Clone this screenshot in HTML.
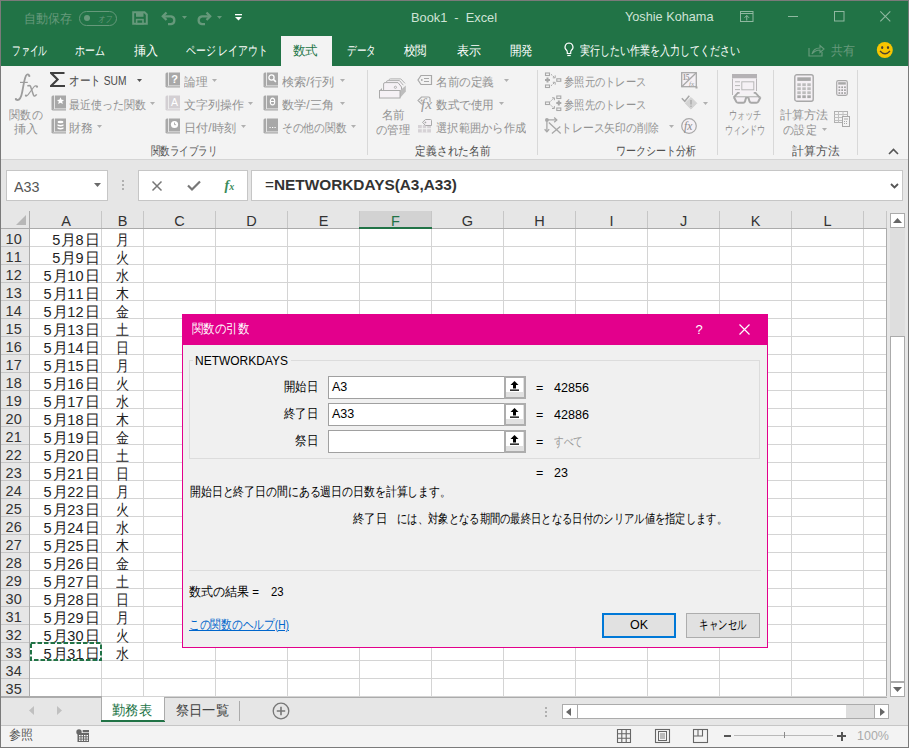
<!DOCTYPE html><html><head><meta charset="utf-8"><style>
html,body{margin:0;padding:0;width:909px;height:748px;overflow:hidden;background:#fff}
body{position:relative;font-family:"Liberation Sans",sans-serif;}
body div{position:absolute;box-sizing:border-box}
.t{white-space:nowrap}
svg{position:absolute;overflow:visible}
</style></head><body>
<div style="left:0px;top:0px;width:909px;height:748px;background:#7a7a7a"></div>
<div style="left:1px;top:1px;width:907px;height:65px;background:#217346"></div>
<div style="left:1px;top:66px;width:907px;height:93px;background:#f3f3f3"></div>
<div style="left:1px;top:159px;width:907px;height:1px;background:#d4d4d4"></div>
<div style="left:281px;top:36px;width:51px;height:30px;background:#f3f3f3"></div>
<div style="left:1px;top:160px;width:907px;height:51px;background:#e6e6e6"></div>
<div style="left:1px;top:211px;width:885px;height:18px;background:#e6e6e6"></div>
<div style="left:30px;top:229px;width:856px;height:468px;background:#fff"></div>
<div style="left:1px;top:229px;width:29px;height:468px;background:#e6e6e6"></div>
<div style="left:886px;top:211px;width:22px;height:486px;background:#e6e6e6"></div>
<div style="left:1px;top:697px;width:907px;height:28px;background:#e6e6e6"></div>
<div style="left:1px;top:725px;width:907px;height:22px;background:#f3f3f3"></div>
<div id="t1" class="t" style="left:23.8px;top:11.5px;font-size:12.5px;line-height:15.0px;color:#66997b;transform:scaleX(0.9231);transform-origin:left center;">自動保存</div>
<div style="left:79px;top:11px;width:38px;height:15px;border:1px solid #66997b;border-radius:8px"></div>
<div style="left:83.5px;top:14.5px;width:6.5px;height:6.5px;background:#66997b;border-radius:50%"></div>
<div id="t2" class="t" style="left:97.5px;top:13.6px;font-size:9px;line-height:10.8px;color:#66997b;transform:scaleX(0.7500);transform-origin:left center;font-style:italic">オフ</div>
<svg style="left:132px;top:11px;" width="16" height="14" viewBox="0 0 16 14"><path d="M1.2 1.2h11.3l2.3 2.3v9.3H1.2z" fill="none" stroke="#66997b" stroke-width="2"/><rect x="4" y="1" width="7.5" height="4.8" fill="#66997b"/><rect x="4.6" y="8.6" width="6.4" height="4.2" fill="none" stroke="#66997b" stroke-width="1.6"/></svg>
<svg style="left:161px;top:11px;" width="17" height="14" viewBox="0 0 17 14"><path d="M5.5 1.5L1.8 5.3L5.5 9" fill="none" stroke="#66997b" stroke-width="2.3"/><path d="M2.3 5.3H10A4 4 0 0 1 10 13.2H7" fill="none" stroke="#66997b" stroke-width="2.3"/></svg>
<svg style="left:182px;top:16px;" width="5" height="3" viewBox="0 0 5 3"><path d="M0 0h5l-2.5 3z" fill="#66997b"/></svg>
<svg style="left:195px;top:11px;" width="17" height="14" viewBox="0 0 17 14"><path d="M11.5 1.5L15.2 5.3L11.5 9" fill="none" stroke="#66997b" stroke-width="2.3"/><path d="M14.7 5.3H7A4 4 0 0 0 7 13.2H10" fill="none" stroke="#66997b" stroke-width="2.3"/></svg>
<svg style="left:217px;top:16px;" width="5" height="3" viewBox="0 0 5 3"><path d="M0 0h5l-2.5 3z" fill="#66997b"/></svg>
<svg style="left:235px;top:14px;" width="7" height="7" viewBox="0 0 7 7"><rect x="0" y="0" width="7" height="1.3" fill="#fff"/><path d="M0 3h7l-3.5 3.5z" fill="#fff"/></svg>
<div id="t3" class="t" style="left:153.5px;width:600px;text-align:center;top:10.4px;font-size:13.5px;line-height:16.2px;color:#cfe3d6;transform:scaleX(0.9472);transform-origin:center center;">Book1&nbsp; -&nbsp; Excel</div>
<div id="t4" class="t" style="left:625px;top:9.4px;font-size:13.5px;line-height:16.2px;color:#cfe3d6;transform:scaleX(0.9407);transform-origin:left center;">Yoshie Kohama</div>
<svg style="left:740px;top:11px;" width="13" height="10" viewBox="0 0 13 10"><rect x="0.5" y="0.5" width="12.5" height="10" fill="none" stroke="#8fb8a0"/><path d="M0.5 2.5h12.5" stroke="#8fb8a0"/><path d="M6.75 9.5V4.5M4.5 6.8L6.75 4.5 9 6.8" fill="none" stroke="#8fb8a0"/></svg>
<svg style="left:788px;top:16px;" width="10" height="1" viewBox="0 0 10 1"><rect width="10" height="1" fill="#8fb8a0"/></svg>
<svg style="left:834px;top:11px;" width="10" height="10" viewBox="0 0 10 10"><rect x="0.5" y="0.5" width="9.5" height="9.5" fill="none" stroke="#8fb8a0"/></svg>
<svg style="left:880px;top:11px;" width="10" height="10" viewBox="0 0 10 10"><path d="M0.3 0.3l10 10M10.3 0.3l-10 10" stroke="#8fb8a0" stroke-width="1.1"/></svg>
<div id="t5" class="t" style="left:12px;top:43.7px;font-size:12.5px;line-height:15.0px;color:#fff;transform:scaleX(0.6731);transform-origin:left center;">ファイル</div>
<div id="t6" class="t" style="left:75px;top:43.7px;font-size:12.5px;line-height:15.0px;color:#fff;transform:scaleX(0.7692);transform-origin:left center;">ホーム</div>
<div id="t7" class="t" style="left:134px;top:43.7px;font-size:12.5px;line-height:15.0px;color:#fff;transform:scaleX(0.9231);transform-origin:left center;">挿入</div>
<div id="t8" class="t" style="left:186px;top:43.7px;font-size:12.5px;line-height:15.0px;color:#fff;transform:scaleX(0.7629);transform-origin:left center;">ページ レイアウト</div>
<div id="t9" class="t" style="left:293px;top:43.7px;font-size:12.5px;line-height:15.0px;color:#217346;transform:scaleX(0.9615);transform-origin:left center;">数式</div>
<div id="t10" class="t" style="left:347px;top:43.7px;font-size:12.5px;line-height:15.0px;color:#fff;transform:scaleX(0.7436);transform-origin:left center;">データ</div>
<div id="t11" class="t" style="left:404px;top:43.7px;font-size:12.5px;line-height:15.0px;color:#fff;transform:scaleX(0.8846);transform-origin:left center;">校閲</div>
<div id="t12" class="t" style="left:457px;top:43.7px;font-size:12.5px;line-height:15.0px;color:#fff;transform:scaleX(0.9231);transform-origin:left center;">表示</div>
<div id="t13" class="t" style="left:510px;top:43.7px;font-size:12.5px;line-height:15.0px;color:#fff;transform:scaleX(0.8846);transform-origin:left center;">開発</div>
<svg style="left:564px;top:42px;" width="10" height="16" viewBox="0 0 10 16"><path d="M5 1a4 4 0 0 0-2.6 7c.6.6.9 1.3.9 2.2v1.3h3.4v-1.3c0-.9.3-1.6.9-2.2A4 4 0 0 0 5 1z" fill="none" stroke="#fff" stroke-width="1.2"/><path d="M3.3 13.5h3.4" stroke="#fff" stroke-width="1.2"/></svg>
<div id="t14" class="t" style="left:580px;top:43.7px;font-size:12.5px;line-height:15.0px;color:#fff;transform:scaleX(0.7692);transform-origin:left center;">実行したい作業を入力してください</div>
<svg style="left:808px;top:43px;" width="17" height="14" viewBox="0 0 17 14"><path d="M1 5v8h13v-4" fill="none" stroke="#66997b" stroke-width="1.2"/><path d="M4 11c1-4 4-6 8-6V2.5l4 3.5-4 3.5V7c-3 0-6 1.5-8 4z" fill="none" stroke="#66997b" stroke-width="1.1"/></svg>
<div id="t15" class="t" style="left:831px;top:43.7px;font-size:12.5px;line-height:15.0px;color:#66997b;transform:scaleX(0.9231);transform-origin:left center;">共有</div>
<svg style="left:876px;top:41px;" width="18" height="18" viewBox="0 0 18 18"><circle cx="8.8" cy="9" r="8" fill="#f6c500"/><ellipse cx="6.2" cy="6.6" rx="1.1" ry="1.5" fill="#4a4030"/><ellipse cx="12" cy="6.6" rx="1.1" ry="1.5" fill="#4a4030"/><path d="M4 10q5 5.5 10 0" fill="none" stroke="#4a4030" stroke-width="1.3"/></svg>
<svg style="left:10px;top:70px;" width="32" height="32" viewBox="0 0 32 32"><g fill="none" stroke="#9c9c9c"><path d="M19.2 5.8C18.8 4 17 3.9 16 5.6C15.2 7 14.6 9.5 14 12.4L12.2 22C11.3 26.8 10 30 7.5 30C6.5 30 5.9 29.5 5.8 29" stroke-width="1.8"/><path d="M10 12.4H17.8" stroke-width="1.2"/><path d="M17.4 16.2C18.6 15.3 19.8 15.2 20.6 16.5L23.5 25.2C24 26.3 25.3 26.3 26.7 24.4" stroke-width="1.5"/><path d="M27 16.6C26 15.3 24.8 15.8 23.8 17L18 24.8C17.3 25.8 16.4 26 15.8 25.6" stroke-width="1.1"/></g><g fill="#9c9c9c"><circle cx="19.3" cy="6" r="1.1"/><circle cx="27" cy="16.7" r="1.1"/><circle cx="15.9" cy="25.6" r="1.1"/><circle cx="5.9" cy="29.1" r="1.1"/></g></svg>
<div id="t16" class="t" style="left:-274px;width:600px;text-align:center;top:108.0px;font-size:12px;line-height:14.4px;color:#929292;transform:scaleX(0.9167);transform-origin:center center;">関数の</div>
<div id="t17" class="t" style="left:-274px;width:600px;text-align:center;top:121.8px;font-size:12px;line-height:14.4px;color:#929292;transform:scaleX(1.0000);transform-origin:center center;">挿入</div>
<svg style="left:49px;top:71px;" width="17" height="17" viewBox="0 0 17 17"><path d="M1 1H15.5V2.9H4.7L10.1 8.5L4.5 14.1H16V16H1V14.5L7.1 8.5L1 2.5Z" fill="#404040"/></svg>
<div id="t18" class="t" style="left:69px;top:74.0px;font-size:12.5px;line-height:15.0px;color:#4a4a4a;transform:scaleX(0.8185);transform-origin:left center;">オート SUM</div>
<svg style="left:137px;top:79px;" width="5" height="3" viewBox="0 0 5 3"><path d="M0 0h5l-2.5 3z" fill="#555"/></svg>
<svg style="left:51px;top:95px;" width="16" height="16" viewBox="0 0 16 16"><path d="M2 0.5h1.2v13.5H2A1.5 1.5 0 0 1 0.5 12.5V2A1.5 1.5 0 0 1 2 0.5z" fill="#a8a8a8"/><rect x="4" y="0.5" width="11" height="13" fill="#a8a8a8"/><path d="M0.5 13.2A1.6 1.6 0 0 0 2 15.5H15v-1.3H2.2" fill="#a8a8a8"/><path d="M9.5 2.3l1.1 2.4 2.5.2-1.9 1.7.6 2.5-2.3-1.3-2.3 1.3.6-2.5-1.9-1.7 2.5-.2z" fill="#fff"/></svg>
<div id="t19" class="t" style="left:69px;top:97.6px;font-size:12px;line-height:14.4px;color:#929292;transform:scaleX(0.9167);transform-origin:left center;">最近使った関数</div>
<svg style="left:150px;top:102px;" width="5" height="3" viewBox="0 0 5 3"><path d="M0 0h5l-2.5 3z" fill="#b0b0b0"/></svg>
<svg style="left:51px;top:118px;" width="16" height="16" viewBox="0 0 16 16"><path d="M2 0.5h1.2v13.5H2A1.5 1.5 0 0 1 0.5 12.5V2A1.5 1.5 0 0 1 2 0.5z" fill="#a8a8a8"/><rect x="4" y="0.5" width="11" height="13" fill="#a8a8a8"/><path d="M0.5 13.2A1.6 1.6 0 0 0 2 15.5H15v-1.3H2.2" fill="#a8a8a8"/><ellipse cx="9.5" cy="4" rx="3" ry="1.3" fill="#fff"/><path d="M6.5 6.2q3 1.6 6 0v1.5q-3 1.6-6 0zM6.5 9.2q3 1.6 6 0v1.5q-3 1.6-6 0z" fill="#fff"/></svg>
<div id="t20" class="t" style="left:69px;top:120.8px;font-size:12px;line-height:14.4px;color:#929292;transform:scaleX(0.9792);transform-origin:left center;">財務</div>
<svg style="left:97px;top:125px;" width="5" height="3" viewBox="0 0 5 3"><path d="M0 0h5l-2.5 3z" fill="#b0b0b0"/></svg>
<svg style="left:165px;top:72px;" width="16" height="16" viewBox="0 0 16 16"><path d="M2 0.5h1.2v13.5H2A1.5 1.5 0 0 1 0.5 12.5V2A1.5 1.5 0 0 1 2 0.5z" fill="#a8a8a8"/><rect x="4" y="0.5" width="11" height="13" fill="#a8a8a8"/><path d="M0.5 13.2A1.6 1.6 0 0 0 2 15.5H15v-1.3H2.2" fill="#a8a8a8"/><text x="9.5" y="11" font-size="11" font-family="Liberation Sans" font-weight="bold" text-anchor="middle" fill="#fff">?</text></svg>
<div id="t21" class="t" style="left:184px;top:74.7px;font-size:12px;line-height:14.4px;color:#929292;transform:scaleX(0.9792);transform-origin:left center;">論理</div>
<svg style="left:212px;top:79px;" width="5" height="3" viewBox="0 0 5 3"><path d="M0 0h5l-2.5 3z" fill="#b0b0b0"/></svg>
<svg style="left:165px;top:95px;" width="16" height="16" viewBox="0 0 16 16"><path d="M2 0.5h1.2v13.5H2A1.5 1.5 0 0 1 0.5 12.5V2A1.5 1.5 0 0 1 2 0.5z" fill="#d3cfd3"/><rect x="4" y="0.5" width="11" height="13" fill="#d3cfd3"/><path d="M0.5 13.2A1.6 1.6 0 0 0 2 15.5H15v-1.3H2.2" fill="#d3cfd3"/><text x="9.5" y="11" font-size="10.5" font-family="Liberation Sans" text-anchor="middle" fill="#fff">A</text></svg>
<div id="t22" class="t" style="left:184px;top:97.6px;font-size:12px;line-height:14.4px;color:#929292;transform:scaleX(1.0000);transform-origin:left center;">文字列操作</div>
<svg style="left:248px;top:102px;" width="5" height="3" viewBox="0 0 5 3"><path d="M0 0h5l-2.5 3z" fill="#b0b0b0"/></svg>
<svg style="left:165px;top:118px;" width="16" height="16" viewBox="0 0 16 16"><path d="M2 0.5h1.2v13.5H2A1.5 1.5 0 0 1 0.5 12.5V2A1.5 1.5 0 0 1 2 0.5z" fill="#a8a8a8"/><rect x="4" y="0.5" width="11" height="13" fill="#a8a8a8"/><path d="M0.5 13.2A1.6 1.6 0 0 0 2 15.5H15v-1.3H2.2" fill="#a8a8a8"/><circle cx="9.5" cy="6.5" r="3.6" fill="#fff"/><path d="M9.5 4.5v2.2h1.6" stroke="#a8a8a8" stroke-width="0.9" fill="none"/></svg>
<div id="t23" class="t" style="left:184px;top:120.8px;font-size:12px;line-height:14.4px;color:#929292;transform:scaleX(1.0128);transform-origin:left center;">日付/時刻</div>
<svg style="left:241px;top:125px;" width="5" height="3" viewBox="0 0 5 3"><path d="M0 0h5l-2.5 3z" fill="#b0b0b0"/></svg>
<svg style="left:263px;top:72px;" width="16" height="16" viewBox="0 0 16 16"><path d="M2 0.5h1.2v13.5H2A1.5 1.5 0 0 1 0.5 12.5V2A1.5 1.5 0 0 1 2 0.5z" fill="#a8a8a8"/><rect x="4" y="0.5" width="11" height="13" fill="#a8a8a8"/><path d="M0.5 13.2A1.6 1.6 0 0 0 2 15.5H15v-1.3H2.2" fill="#a8a8a8"/><circle cx="8.5" cy="5.5" r="2.6" fill="none" stroke="#fff" stroke-width="1.3"/><path d="M10.3 7.3l2.6 2.6" stroke="#fff" stroke-width="1.6"/></svg>
<div id="t24" class="t" style="left:282px;top:74.7px;font-size:12px;line-height:14.4px;color:#929292;transform:scaleX(1.0128);transform-origin:left center;">検索/行列</div>
<svg style="left:340px;top:79px;" width="5" height="3" viewBox="0 0 5 3"><path d="M0 0h5l-2.5 3z" fill="#b0b0b0"/></svg>
<svg style="left:263px;top:95px;" width="16" height="16" viewBox="0 0 16 16"><path d="M2 0.5h1.2v13.5H2A1.5 1.5 0 0 1 0.5 12.5V2A1.5 1.5 0 0 1 2 0.5z" fill="#a8a8a8"/><rect x="4" y="0.5" width="11" height="13" fill="#a8a8a8"/><path d="M0.5 13.2A1.6 1.6 0 0 0 2 15.5H15v-1.3H2.2" fill="#a8a8a8"/><ellipse cx="9.5" cy="6.5" rx="2.2" ry="3.4" fill="none" stroke="#fff" stroke-width="1.1"/><path d="M7.5 6.5h4" stroke="#fff" stroke-width="1"/></svg>
<div id="t25" class="t" style="left:282px;top:97.6px;font-size:12px;line-height:14.4px;color:#929292;transform:scaleX(1.0128);transform-origin:left center;">数学/三角</div>
<svg style="left:340px;top:102px;" width="5" height="3" viewBox="0 0 5 3"><path d="M0 0h5l-2.5 3z" fill="#b0b0b0"/></svg>
<svg style="left:263px;top:118px;" width="16" height="16" viewBox="0 0 16 16"><path d="M2 0.5h1.2v13.5H2A1.5 1.5 0 0 1 0.5 12.5V2A1.5 1.5 0 0 1 2 0.5z" fill="#a8a8a8"/><rect x="4" y="0.5" width="11" height="13" fill="#a8a8a8"/><path d="M0.5 13.2A1.6 1.6 0 0 0 2 15.5H15v-1.3H2.2" fill="#a8a8a8"/><path d="M6.5 9.5h1.2M9 9.5h1.2M11.5 9.5h1.2" stroke="#fff" stroke-width="1.2"/></svg>
<div id="t26" class="t" style="left:282px;top:120.8px;font-size:12px;line-height:14.4px;color:#929292;transform:scaleX(0.8958);transform-origin:left center;">その他の関数</div>
<svg style="left:351px;top:125px;" width="5" height="3" viewBox="0 0 5 3"><path d="M0 0h5l-2.5 3z" fill="#b0b0b0"/></svg>
<div id="t27" class="t" style="left:-116.0px;width:600px;text-align:center;top:144.1px;font-size:12px;line-height:14.4px;color:#505050;transform:scaleX(0.7976);transform-origin:center center;">関数ライブラリ</div>
<div style="left:367px;top:70px;width:1px;height:85px;background:#d8d8d8"></div>
<svg style="left:379px;top:77px;" width="28" height="22" viewBox="0 0 28 22"><path d="M10 3.2Q10 1.9 11.4 1.9H21.8L26 6.4" fill="none" stroke="#b0b0b0" stroke-width="1"/><path d="M7.5 5Q7.5 3.6 8.9 3.6H20.5L24.3 8.2" fill="#f5f1f5" stroke="#b0b0b0" stroke-width="1"/><path d="M4.6 13V7Q4.6 5.6 6 5.6H19L22.5 10V13" fill="#f5f1f5" stroke="#aaa" stroke-width="1"/><circle cx="16.4" cy="10.3" r="1.1" fill="none" stroke="#aaa" stroke-width="0.9"/><path d="M21 13.5L26.8 8.4V14.5L21 21z" fill="#bdbdbd"/><rect x="0.5" y="13.5" width="20.5" height="7.5" fill="#f5f1f5" stroke="#aaa" stroke-width="1"/><path d="M0.5 13.5L3 11V13.5z" fill="#aaa"/></svg>
<div id="t28" class="t" style="left:93px;width:600px;text-align:center;top:108.2px;font-size:12px;line-height:14.4px;color:#929292;transform:scaleX(0.9583);transform-origin:center center;">名前</div>
<div id="t29" class="t" style="left:93px;width:600px;text-align:center;top:122.8px;font-size:12px;line-height:14.4px;color:#929292;transform:scaleX(0.9444);transform-origin:center center;">の管理</div>
<svg style="left:417px;top:74px;" width="16" height="12" viewBox="0 0 16 12"><path d="M4 1.5h10.5v9H4L1 6z" fill="none" stroke="#a8a8a8" stroke-width="1.2"/><circle cx="4.8" cy="6" r="0.9" fill="#a8a8a8"/><path d="M7 4.5h5M7 7.5h5" stroke="#a8a8a8" stroke-width="1.1"/></svg>
<div id="t30" class="t" style="left:436px;top:75.1px;font-size:12px;line-height:14.4px;color:#929292;transform:scaleX(0.9667);transform-origin:left center;">名前の定義</div>
<svg style="left:504px;top:79px;" width="5" height="3" viewBox="0 0 5 3"><path d="M0 0h5l-2.5 3z" fill="#b0b0b0"/></svg>
<svg style="left:417px;top:96px;" width="16" height="16" viewBox="0 0 16 16"><path d="M13 6V2.5Q13 1 11.5 1H4.5L1 4.5L4.5 8H6" fill="none" stroke="#aaa" stroke-width="1.1"/><circle cx="4.6" cy="4.5" r="1" fill="#aaa"/></svg>
<div id="t31" class="t" style="left:421px;top:97.1px;font-size:14px;line-height:16.8px;color:#9a9a9a;font-family:'Liberation Serif',serif;transform:scaleX(1.1);transform-origin:left center"><i>fx</i></div>
<div id="t32" class="t" style="left:436px;top:97.5px;font-size:12px;line-height:14.4px;color:#929292;transform:scaleX(0.9667);transform-origin:left center;">数式で使用</div>
<svg style="left:499px;top:102px;" width="5" height="3" viewBox="0 0 5 3"><path d="M0 0h5l-2.5 3z" fill="#b0b0b0"/></svg>
<svg style="left:418px;top:119px;" width="15" height="15" viewBox="0 0 15 15"><rect x="0" y="6" width="13" height="7.5" fill="#d6d2d6"/><path d="M0 9.7h13M4.3 6v7.5M8.7 6v7.5" stroke="#f3f3f3" stroke-width="1"/><path d="M13.5 6.5V1.5Q13.5 0.5 12.5 0.5H7.5L4.5 3.3L7.5 6.5z" fill="#f5f1f5" stroke="#aaa" stroke-width="1"/><circle cx="7.4" cy="3.4" r="0.9" fill="#aaa"/></svg>
<div id="t33" class="t" style="left:436px;top:120.9px;font-size:12px;line-height:14.4px;color:#929292;transform:scaleX(0.9375);transform-origin:left center;">選択範囲から作成</div>
<div id="t34" class="t" style="left:153.0px;width:600px;text-align:center;top:143.6px;font-size:12px;line-height:14.4px;color:#505050;transform:scaleX(0.8929);transform-origin:center center;">定義された名前</div>
<div style="left:537px;top:70px;width:1px;height:85px;background:#d8d8d8"></div>
<svg style="left:544px;top:72px;" width="18" height="16" viewBox="0 0 18 16"><rect x="1.5" y="1" width="4" height="2.5" fill="none" stroke="#a8a8a8" stroke-width="1.1"/><rect x="1.5" y="13" width="4" height="2.5" fill="none" stroke="#a8a8a8" stroke-width="1.1"/><rect x="12.8" y="6.8" width="4" height="2.5" fill="none" stroke="#a8a8a8" stroke-width="1.1"/><path d="M3.5 5.6v5M1 8.1h5" stroke="#a8a8a8" stroke-width="2"/><path d="M7 2.3l3.5 3.2M7 13.8l3.5-3.2" stroke="#a8a8a8" stroke-width="1" stroke-dasharray="1.6 0.9"/><path d="M8.8 5.8h2.4V3.4M8.8 10.3h2.4v2.4" fill="none" stroke="#a8a8a8" stroke-width="1"/></svg>
<div id="t35" class="t" style="left:564px;top:74.9px;font-size:12px;line-height:14.4px;color:#929292;transform:scaleX(0.8542);transform-origin:left center;">参照元のトレース</div>
<svg style="left:544px;top:95px;" width="18" height="16" viewBox="0 0 18 16"><rect x="1.5" y="7" width="4" height="2.5" fill="none" stroke="#a8a8a8" stroke-width="1.1"/><rect x="12.8" y="1" width="4" height="2.5" fill="none" stroke="#a8a8a8" stroke-width="1.1"/><rect x="12.8" y="13" width="4" height="2.5" fill="none" stroke="#a8a8a8" stroke-width="1.1"/><path d="M14.8 5.6v5M12.3 8.1h5" stroke="#a8a8a8" stroke-width="2"/><path d="M6.5 6.3l3.5-3.2M6.5 10l3.5 3.2" stroke="#a8a8a8" stroke-width="1" stroke-dasharray="1.6 0.9"/><path d="M8 2.8h2.4v2.4M8 13.5h2.4v-2.4" fill="none" stroke="#a8a8a8" stroke-width="1"/></svg>
<div id="t36" class="t" style="left:564px;top:97.9px;font-size:12px;line-height:14.4px;color:#929292;transform:scaleX(0.8542);transform-origin:left center;">参照先のトレース</div>
<svg style="left:544px;top:118px;" width="18" height="17" viewBox="0 0 18 17"><circle cx="2.9" cy="1.9" r="1.9" fill="#a8a8a8"/><path d="M2.9 2v11.5M2.9 1.9h9.6" stroke="#a8a8a8" stroke-width="1.3"/><path d="M0.6 11.2l2.3 2.6 2.3-2.6M10.2-0.4l2.6 2.3-2.6 2.3" fill="none" stroke="#a8a8a8" stroke-width="1.3"/><path d="M4.8 4.5L16.7 15.5M7.9 15.5L16.3 8.5" stroke="#a8a8a8" stroke-width="1.3"/></svg>
<div id="t37" class="t" style="left:560.5px;top:120.9px;font-size:12px;line-height:14.4px;color:#929292;transform:scaleX(0.9028);transform-origin:left center;">トレース矢印の削除</div>
<svg style="left:669px;top:125px;" width="5" height="3" viewBox="0 0 5 3"><path d="M0 0h5l-2.5 3z" fill="#b0b0b0"/></svg>
<svg style="left:681px;top:72px;" width="17" height="17" viewBox="0 0 17 17"><rect x="0.7" y="0.7" width="14.6" height="14" fill="#f5f1f5" stroke="#a8a8a8" stroke-width="1.3"/><path d="M0.7 14.7L15.3 0.7" stroke="#a8a8a8" stroke-width="1.3"/><text x="1.6" y="7.6" font-size="7.5" font-family="Liberation Serif" font-weight="bold" fill="#9a9a9a" letter-spacing="-0.6">15</text><text x="8" y="13.8" font-size="7" font-family="Liberation Serif" font-style="italic" fill="#9a9a9a">fx</text><rect x="14.5" y="14.5" width="2" height="2" fill="#a8a8a8"/></svg>
<svg style="left:681px;top:95px;" width="17" height="16" viewBox="0 0 17 16"><path d="M0.8 3.3l3 3 4.5-5.5" fill="none" stroke="#a8a8a8" stroke-width="1.5"/><path d="M10 2.5l5.8 5.8-5.8 5.8-5.8-5.8z" fill="#d3d3d3" stroke="#d3d3d3" stroke-width="1" stroke-linejoin="round"/><path d="M10 5v4.5" stroke="#aaa" stroke-width="1.4"/><circle cx="10" cy="11.3" r="0.8" fill="#aaa"/></svg>
<svg style="left:703px;top:102px;" width="5" height="3" viewBox="0 0 5 3"><path d="M0 0h5l-2.5 3z" fill="#b0b0b0"/></svg>
<svg style="left:681px;top:118px;" width="17" height="17" viewBox="0 0 17 17"><circle cx="8" cy="8" r="7.3" fill="#f5f1f5" stroke="#a8a8a8" stroke-width="1.2"/></svg>
<div id="t38" class="t" style="left:684px;top:119.6px;font-size:11.5px;line-height:13.8px;color:#8a8a8a;font-family:'Liberation Serif',serif"><i>fx</i></div>
<div id="t39" class="t" style="left:356.0px;width:600px;text-align:center;top:144.1px;font-size:12px;line-height:14.4px;color:#505050;transform:scaleX(0.8333);transform-origin:center center;">ワークシート分析</div>
<div style="left:717px;top:70px;width:1px;height:85px;background:#d8d8d8"></div>
<svg style="left:732px;top:74px;" width="30" height="30" viewBox="0 0 30 30"><rect x="0" y="0" width="25" height="4.5" fill="#b5b2b5"/><rect x="0.5" y="4.5" width="24" height="16" fill="#f5f1f5"/><path d="M0.5 4.5V21M24.5 4.5V17" stroke="#b8b5b8" stroke-width="1"/><path d="M3 7.8h5M3 11.6h5M3 15.6h5" stroke="#b8b8b8" stroke-width="1"/><rect x="9.8" y="7.8" width="12" height="8" fill="none" stroke="#b8b8b8" stroke-width="1"/><path d="M1.5 23.3h27" stroke="#a8a8a8" stroke-width="2"/><path d="M2 23.3l2.3 4.4q.6 1 1.8 1h5.2q1.2 0 1.6-1l1.3-4.4" fill="#f5f1f5" stroke="#a8a8a8" stroke-width="2"/><path d="M16.3 23.3l1.3 4.4q.4 1 1.6 1h5.2q1.2 0 1.8-1l2.3-4.4" fill="#f5f1f5" stroke="#a8a8a8" stroke-width="2"/><path d="M1.8 23.3l4-4.5h1.8M27.5 23.3l-4-4.5h-1.8" stroke="#a8a8a8" stroke-width="1.8" fill="none"/></svg>
<div id="t40" class="t" style="left:445px;width:600px;text-align:center;top:108.2px;font-size:12px;line-height:14.4px;color:#929292;transform:scaleX(0.6875);transform-origin:center center;">ウォッチ</div>
<div id="t41" class="t" style="left:445px;width:600px;text-align:center;top:122.8px;font-size:12px;line-height:14.4px;color:#929292;transform:scaleX(0.6833);transform-origin:center center;">ウィンドウ</div>
<div style="left:773px;top:70px;width:1px;height:85px;background:#d8d8d8"></div>
<svg style="left:794px;top:74px;" width="20" height="28" viewBox="0 0 20 28"><rect x="0.8" y="0.8" width="18.4" height="26.4" rx="2" fill="#f5f1f5" stroke="#a8a8a8" stroke-width="1.4"/><rect x="3.3" y="3.3" width="13.5" height="3.6" fill="#a8a8a8"/><rect x="3.3" y="9.3" width="3.5" height="2.8" fill="#bcbcbc"/><rect x="8.3" y="9.3" width="3.5" height="2.8" fill="#bcbcbc"/><rect x="13.3" y="9.3" width="3.5" height="2.8" fill="#bcbcbc"/><rect x="3.3" y="13.3" width="3.5" height="2.8" fill="#bcbcbc"/><rect x="8.3" y="13.3" width="3.5" height="2.8" fill="#bcbcbc"/><rect x="13.3" y="13.3" width="3.5" height="2.8" fill="#bcbcbc"/><rect x="3.3" y="17.3" width="3.5" height="2.8" fill="#bcbcbc"/><rect x="8.3" y="17.3" width="3.5" height="2.8" fill="#bcbcbc"/><rect x="13.3" y="17.3" width="3.5" height="2.8" fill="#bcbcbc"/><rect x="3.3" y="21.3" width="3.5" height="2.8" fill="#a8a8a8"/><rect x="8.3" y="21.3" width="3.5" height="2.8" fill="#a8a8a8"/><rect x="13.3" y="21.3" width="3.5" height="2.8" fill="#a8a8a8"/></svg>
<div id="t42" class="t" style="left:504px;width:600px;text-align:center;top:108.2px;font-size:12px;line-height:14.4px;color:#929292;transform:scaleX(1.0000);transform-origin:center center;">計算方法</div>
<div id="t43" class="t" style="left:500px;width:600px;text-align:center;top:122.8px;font-size:12px;line-height:14.4px;color:#929292;transform:scaleX(0.9167);transform-origin:center center;">の設定</div>
<svg style="left:822px;top:128px;" width="5" height="3" viewBox="0 0 5 3"><path d="M0 0h5l-2.5 3z" fill="#b0b0b0"/></svg>
<svg style="left:836px;top:80px;" width="12" height="16" viewBox="0 0 12 16"><rect x="0.7" y="0.7" width="10.6" height="14.6" rx="1.5" fill="#f5f1f5" stroke="#a8a8a8" stroke-width="1.2"/><rect x="2.2" y="2.2" width="7.6" height="2.4" fill="#a8a8a8"/><rect x="2.5" y="6.4" width="1.7" height="1.7" fill="#a0a0a0"/><rect x="5.3" y="6.4" width="1.7" height="1.7" fill="#a0a0a0"/><rect x="8.1" y="6.4" width="1.7" height="1.7" fill="#a0a0a0"/><rect x="2.5" y="9.3" width="1.7" height="1.7" fill="#a0a0a0"/><rect x="5.3" y="9.3" width="1.7" height="1.7" fill="#a0a0a0"/><rect x="8.1" y="9.3" width="1.7" height="1.7" fill="#a0a0a0"/><rect x="2.5" y="12.2" width="1.7" height="1.7" fill="#a0a0a0"/><rect x="5.3" y="12.2" width="1.7" height="1.7" fill="#a0a0a0"/><rect x="8.1" y="12.2" width="1.7" height="1.7" fill="#a0a0a0"/></svg>
<svg style="left:834px;top:111px;" width="16" height="16" viewBox="0 0 16 16"><rect x="0.5" y="0.5" width="13" height="11" fill="#f3f3f3" stroke="#b0b0b0"/><path d="M0.5 3.5h13M0.5 6.5h13M0.5 9.5h13M4.5 0.5v11M9 0.5v11" stroke="#c0c0c0"/><rect x="8.5" y="5.5" width="7" height="10" fill="#f3f3f3" stroke="#a8a8a8"/><path d="M10 8h4M10 10.5h1M12 10.5h1M10 12.5h1M12 12.5h1" stroke="#a8a8a8"/></svg>
<div id="t44" class="t" style="left:516.0px;width:600px;text-align:center;top:144.3px;font-size:12px;line-height:14.4px;color:#505050;transform:scaleX(0.9792);transform-origin:center center;">計算方法</div>
<div style="left:857px;top:70px;width:1px;height:85px;background:#d8d8d8"></div>
<svg style="left:888px;top:148px;" width="11" height="7" viewBox="0 0 11 7"><path d="M1 6l4.5-4.5L10 6" fill="none" stroke="#555" stroke-width="1.6"/></svg>
<div style="left:6px;top:170px;width:102px;height:31px;background:#fff;border:1px solid #c6c6c6"></div>
<div id="t45" class="t" style="left:14px;top:178.0px;font-size:15px;line-height:18.0px;color:#555;transform:scaleX(0.9549);transform-origin:left center;">A33</div>
<svg style="left:94px;top:183px;" width="7" height="4" viewBox="0 0 7 4"><path d="M0 0h7l-3.5 4z" fill="#6a6a6a"/></svg>
<div style="left:122px;top:180px;width:2px;height:2px;background:#b0b0b0"></div>
<div style="left:122px;top:184px;width:2px;height:2px;background:#b0b0b0"></div>
<div style="left:122px;top:188px;width:2px;height:2px;background:#b0b0b0"></div>
<div style="left:138px;top:170px;width:110px;height:31px;background:#fff;border:1px solid #c6c6c6"></div>
<svg style="left:152px;top:181px;" width="10" height="10" viewBox="0 0 10 10"><path d="M0.5 0.5l9 9M9.5 0.5l-9 9" stroke="#777" stroke-width="1.5"/></svg>
<svg style="left:187px;top:180px;" width="14" height="11" viewBox="0 0 14 11"><path d="M1 5.5l4 4L13 1.5" fill="none" stroke="#777" stroke-width="2.2"/></svg>
<div id="t46" class="t" style="left:224.5px;top:178.1px;font-size:14px;line-height:16.8px;color:#3b8a5a;font-family:'Liberation Serif',serif"><i><b>f</b></i><i style="font-size:10px"><b>x</b></i></div>
<div style="left:251px;top:170px;width:652px;height:31px;background:#fff;border:1px solid #c6c6c6"></div>
<div id="t47" class="t" style="left:265px;top:175.7px;font-size:15.5px;line-height:18.6px;color:#333;transform:scaleX(0.9914);transform-origin:left center;font-weight:bold"><span style="font-weight:normal">=</span>NETWORKDAYS(A3,A33)</div>
<svg style="left:890px;top:183px;" width="9" height="6" viewBox="0 0 9 6"><path d="M1 1l3.5 3.5L8 1" fill="none" stroke="#555" stroke-width="1.8"/></svg>
<div style="left:360px;top:211px;width:71px;height:18px;background:#d2d2d2"></div>
<div style="left:101px;top:211px;width:1px;height:17px;background:#c6c6c6"></div>
<div style="left:143px;top:211px;width:1px;height:17px;background:#c6c6c6"></div>
<div style="left:215px;top:211px;width:1px;height:17px;background:#c6c6c6"></div>
<div style="left:287px;top:211px;width:1px;height:17px;background:#c6c6c6"></div>
<div style="left:359px;top:211px;width:1px;height:17px;background:#c6c6c6"></div>
<div style="left:431px;top:211px;width:1px;height:17px;background:#c6c6c6"></div>
<div style="left:503px;top:211px;width:1px;height:17px;background:#c6c6c6"></div>
<div style="left:575px;top:211px;width:1px;height:17px;background:#c6c6c6"></div>
<div style="left:647px;top:211px;width:1px;height:17px;background:#c6c6c6"></div>
<div style="left:719px;top:211px;width:1px;height:17px;background:#c6c6c6"></div>
<div style="left:791px;top:211px;width:1px;height:17px;background:#c6c6c6"></div>
<div style="left:863px;top:211px;width:1px;height:17px;background:#c6c6c6"></div>
<div style="left:886px;top:211px;width:1px;height:17px;background:#c6c6c6"></div>
<div style="left:29px;top:211px;width:1px;height:486px;background:#ababab"></div>
<div style="left:1px;top:228px;width:885px;height:1px;background:#ababab"></div>
<div style="left:359px;top:227px;width:73px;height:2px;background:#217346"></div>
<svg style="left:16px;top:215px;" width="10" height="10" viewBox="0 0 10 10"><path d="M10 0v10H0z" fill="#b7b7b7"/></svg>
<div id="t48" class="t" style="left:-234.0px;width:600px;text-align:center;top:213.3px;font-size:14.5px;line-height:17.4px;color:#333;">A</div>
<div id="t49" class="t" style="left:-177.5px;width:600px;text-align:center;top:213.3px;font-size:14.5px;line-height:17.4px;color:#333;">B</div>
<div id="t50" class="t" style="left:-120.5px;width:600px;text-align:center;top:213.3px;font-size:14.5px;line-height:17.4px;color:#333;">C</div>
<div id="t51" class="t" style="left:-48.5px;width:600px;text-align:center;top:213.3px;font-size:14.5px;line-height:17.4px;color:#333;">D</div>
<div id="t52" class="t" style="left:23.5px;width:600px;text-align:center;top:213.3px;font-size:14.5px;line-height:17.4px;color:#333;">E</div>
<div id="t53" class="t" style="left:95.5px;width:600px;text-align:center;top:213.3px;font-size:14.5px;line-height:17.4px;color:#217346;">F</div>
<div id="t54" class="t" style="left:167.5px;width:600px;text-align:center;top:213.3px;font-size:14.5px;line-height:17.4px;color:#333;">G</div>
<div id="t55" class="t" style="left:239.5px;width:600px;text-align:center;top:213.3px;font-size:14.5px;line-height:17.4px;color:#333;">H</div>
<div id="t56" class="t" style="left:311.5px;width:600px;text-align:center;top:213.3px;font-size:14.5px;line-height:17.4px;color:#333;">I</div>
<div id="t57" class="t" style="left:383.5px;width:600px;text-align:center;top:213.3px;font-size:14.5px;line-height:17.4px;color:#333;">J</div>
<div id="t58" class="t" style="left:455.5px;width:600px;text-align:center;top:213.3px;font-size:14.5px;line-height:17.4px;color:#333;">K</div>
<div id="t59" class="t" style="left:527.5px;width:600px;text-align:center;top:213.3px;font-size:14.5px;line-height:17.4px;color:#333;">L</div>
<div style="left:101px;top:229px;width:1px;height:468px;background:#d4d4d4"></div>
<div style="left:143px;top:229px;width:1px;height:468px;background:#d4d4d4"></div>
<div style="left:215px;top:229px;width:1px;height:468px;background:#d4d4d4"></div>
<div style="left:287px;top:229px;width:1px;height:468px;background:#d4d4d4"></div>
<div style="left:359px;top:229px;width:1px;height:468px;background:#d4d4d4"></div>
<div style="left:431px;top:229px;width:1px;height:468px;background:#d4d4d4"></div>
<div style="left:503px;top:229px;width:1px;height:468px;background:#d4d4d4"></div>
<div style="left:575px;top:229px;width:1px;height:468px;background:#d4d4d4"></div>
<div style="left:647px;top:229px;width:1px;height:468px;background:#d4d4d4"></div>
<div style="left:719px;top:229px;width:1px;height:468px;background:#d4d4d4"></div>
<div style="left:791px;top:229px;width:1px;height:468px;background:#d4d4d4"></div>
<div style="left:863px;top:229px;width:1px;height:468px;background:#d4d4d4"></div>
<div style="left:30px;top:246px;width:856px;height:1px;background:#d4d4d4"></div>
<div style="left:1px;top:246px;width:28px;height:1px;background:#c6c6c6"></div>
<div id="t60" class="t" style="left:5.5px;top:230.8px;font-size:14.5px;line-height:17.4px;color:#333;">1</div>
<div id="t61" class="t" style="left:13.7px;top:230.8px;font-size:14.5px;line-height:17.4px;color:#333;">0</div>
<div style="left:30px;top:264px;width:856px;height:1px;background:#d4d4d4"></div>
<div style="left:1px;top:264px;width:28px;height:1px;background:#c6c6c6"></div>
<div id="t62" class="t" style="left:5.5px;top:248.8px;font-size:14.5px;line-height:17.4px;color:#333;">1</div>
<div id="t63" class="t" style="left:13.7px;top:248.8px;font-size:14.5px;line-height:17.4px;color:#333;">1</div>
<div style="left:30px;top:282px;width:856px;height:1px;background:#d4d4d4"></div>
<div style="left:1px;top:282px;width:28px;height:1px;background:#c6c6c6"></div>
<div id="t64" class="t" style="left:5.5px;top:266.8px;font-size:14.5px;line-height:17.4px;color:#333;">1</div>
<div id="t65" class="t" style="left:13.7px;top:266.8px;font-size:14.5px;line-height:17.4px;color:#333;">2</div>
<div style="left:30px;top:300px;width:856px;height:1px;background:#d4d4d4"></div>
<div style="left:1px;top:300px;width:28px;height:1px;background:#c6c6c6"></div>
<div id="t66" class="t" style="left:5.5px;top:284.8px;font-size:14.5px;line-height:17.4px;color:#333;">1</div>
<div id="t67" class="t" style="left:13.7px;top:284.8px;font-size:14.5px;line-height:17.4px;color:#333;">3</div>
<div style="left:30px;top:318px;width:856px;height:1px;background:#d4d4d4"></div>
<div style="left:1px;top:318px;width:28px;height:1px;background:#c6c6c6"></div>
<div id="t68" class="t" style="left:5.5px;top:302.8px;font-size:14.5px;line-height:17.4px;color:#333;">1</div>
<div id="t69" class="t" style="left:13.7px;top:302.8px;font-size:14.5px;line-height:17.4px;color:#333;">4</div>
<div style="left:30px;top:336px;width:856px;height:1px;background:#d4d4d4"></div>
<div style="left:1px;top:336px;width:28px;height:1px;background:#c6c6c6"></div>
<div id="t70" class="t" style="left:5.5px;top:320.8px;font-size:14.5px;line-height:17.4px;color:#333;">1</div>
<div id="t71" class="t" style="left:13.7px;top:320.8px;font-size:14.5px;line-height:17.4px;color:#333;">5</div>
<div style="left:30px;top:354px;width:856px;height:1px;background:#d4d4d4"></div>
<div style="left:1px;top:354px;width:28px;height:1px;background:#c6c6c6"></div>
<div id="t72" class="t" style="left:5.5px;top:338.8px;font-size:14.5px;line-height:17.4px;color:#333;">1</div>
<div id="t73" class="t" style="left:13.7px;top:338.8px;font-size:14.5px;line-height:17.4px;color:#333;">6</div>
<div style="left:30px;top:372px;width:856px;height:1px;background:#d4d4d4"></div>
<div style="left:1px;top:372px;width:28px;height:1px;background:#c6c6c6"></div>
<div id="t74" class="t" style="left:5.5px;top:356.8px;font-size:14.5px;line-height:17.4px;color:#333;">1</div>
<div id="t75" class="t" style="left:13.7px;top:356.8px;font-size:14.5px;line-height:17.4px;color:#333;">7</div>
<div style="left:30px;top:390px;width:856px;height:1px;background:#d4d4d4"></div>
<div style="left:1px;top:390px;width:28px;height:1px;background:#c6c6c6"></div>
<div id="t76" class="t" style="left:5.5px;top:374.8px;font-size:14.5px;line-height:17.4px;color:#333;">1</div>
<div id="t77" class="t" style="left:13.7px;top:374.8px;font-size:14.5px;line-height:17.4px;color:#333;">8</div>
<div style="left:30px;top:408px;width:856px;height:1px;background:#d4d4d4"></div>
<div style="left:1px;top:408px;width:28px;height:1px;background:#c6c6c6"></div>
<div id="t78" class="t" style="left:5.5px;top:392.8px;font-size:14.5px;line-height:17.4px;color:#333;">1</div>
<div id="t79" class="t" style="left:13.7px;top:392.8px;font-size:14.5px;line-height:17.4px;color:#333;">9</div>
<div style="left:30px;top:426px;width:856px;height:1px;background:#d4d4d4"></div>
<div style="left:1px;top:426px;width:28px;height:1px;background:#c6c6c6"></div>
<div id="t80" class="t" style="left:5.5px;top:410.8px;font-size:14.5px;line-height:17.4px;color:#333;">2</div>
<div id="t81" class="t" style="left:13.7px;top:410.8px;font-size:14.5px;line-height:17.4px;color:#333;">0</div>
<div style="left:30px;top:444px;width:856px;height:1px;background:#d4d4d4"></div>
<div style="left:1px;top:444px;width:28px;height:1px;background:#c6c6c6"></div>
<div id="t82" class="t" style="left:5.5px;top:428.8px;font-size:14.5px;line-height:17.4px;color:#333;">2</div>
<div id="t83" class="t" style="left:13.7px;top:428.8px;font-size:14.5px;line-height:17.4px;color:#333;">1</div>
<div style="left:30px;top:462px;width:856px;height:1px;background:#d4d4d4"></div>
<div style="left:1px;top:462px;width:28px;height:1px;background:#c6c6c6"></div>
<div id="t84" class="t" style="left:5.5px;top:446.8px;font-size:14.5px;line-height:17.4px;color:#333;">2</div>
<div id="t85" class="t" style="left:13.7px;top:446.8px;font-size:14.5px;line-height:17.4px;color:#333;">2</div>
<div style="left:30px;top:480px;width:856px;height:1px;background:#d4d4d4"></div>
<div style="left:1px;top:480px;width:28px;height:1px;background:#c6c6c6"></div>
<div id="t86" class="t" style="left:5.5px;top:464.8px;font-size:14.5px;line-height:17.4px;color:#333;">2</div>
<div id="t87" class="t" style="left:13.7px;top:464.8px;font-size:14.5px;line-height:17.4px;color:#333;">3</div>
<div style="left:30px;top:498px;width:856px;height:1px;background:#d4d4d4"></div>
<div style="left:1px;top:498px;width:28px;height:1px;background:#c6c6c6"></div>
<div id="t88" class="t" style="left:5.5px;top:482.8px;font-size:14.5px;line-height:17.4px;color:#333;">2</div>
<div id="t89" class="t" style="left:13.7px;top:482.8px;font-size:14.5px;line-height:17.4px;color:#333;">4</div>
<div style="left:30px;top:516px;width:856px;height:1px;background:#d4d4d4"></div>
<div style="left:1px;top:516px;width:28px;height:1px;background:#c6c6c6"></div>
<div id="t90" class="t" style="left:5.5px;top:500.8px;font-size:14.5px;line-height:17.4px;color:#333;">2</div>
<div id="t91" class="t" style="left:13.7px;top:500.8px;font-size:14.5px;line-height:17.4px;color:#333;">5</div>
<div style="left:30px;top:534px;width:856px;height:1px;background:#d4d4d4"></div>
<div style="left:1px;top:534px;width:28px;height:1px;background:#c6c6c6"></div>
<div id="t92" class="t" style="left:5.5px;top:518.8px;font-size:14.5px;line-height:17.4px;color:#333;">2</div>
<div id="t93" class="t" style="left:13.7px;top:518.8px;font-size:14.5px;line-height:17.4px;color:#333;">6</div>
<div style="left:30px;top:552px;width:856px;height:1px;background:#d4d4d4"></div>
<div style="left:1px;top:552px;width:28px;height:1px;background:#c6c6c6"></div>
<div id="t94" class="t" style="left:5.5px;top:536.8px;font-size:14.5px;line-height:17.4px;color:#333;">2</div>
<div id="t95" class="t" style="left:13.7px;top:536.8px;font-size:14.5px;line-height:17.4px;color:#333;">7</div>
<div style="left:30px;top:570px;width:856px;height:1px;background:#d4d4d4"></div>
<div style="left:1px;top:570px;width:28px;height:1px;background:#c6c6c6"></div>
<div id="t96" class="t" style="left:5.5px;top:554.8px;font-size:14.5px;line-height:17.4px;color:#333;">2</div>
<div id="t97" class="t" style="left:13.7px;top:554.8px;font-size:14.5px;line-height:17.4px;color:#333;">8</div>
<div style="left:30px;top:588px;width:856px;height:1px;background:#d4d4d4"></div>
<div style="left:1px;top:588px;width:28px;height:1px;background:#c6c6c6"></div>
<div id="t98" class="t" style="left:5.5px;top:572.8px;font-size:14.5px;line-height:17.4px;color:#333;">2</div>
<div id="t99" class="t" style="left:13.7px;top:572.8px;font-size:14.5px;line-height:17.4px;color:#333;">9</div>
<div style="left:30px;top:606px;width:856px;height:1px;background:#d4d4d4"></div>
<div style="left:1px;top:606px;width:28px;height:1px;background:#c6c6c6"></div>
<div id="t100" class="t" style="left:5.5px;top:590.8px;font-size:14.5px;line-height:17.4px;color:#333;">3</div>
<div id="t101" class="t" style="left:13.7px;top:590.8px;font-size:14.5px;line-height:17.4px;color:#333;">0</div>
<div style="left:30px;top:624px;width:856px;height:1px;background:#d4d4d4"></div>
<div style="left:1px;top:624px;width:28px;height:1px;background:#c6c6c6"></div>
<div id="t102" class="t" style="left:5.5px;top:608.8px;font-size:14.5px;line-height:17.4px;color:#333;">3</div>
<div id="t103" class="t" style="left:13.7px;top:608.8px;font-size:14.5px;line-height:17.4px;color:#333;">1</div>
<div style="left:30px;top:642px;width:856px;height:1px;background:#d4d4d4"></div>
<div style="left:1px;top:642px;width:28px;height:1px;background:#c6c6c6"></div>
<div id="t104" class="t" style="left:5.5px;top:626.8px;font-size:14.5px;line-height:17.4px;color:#333;">3</div>
<div id="t105" class="t" style="left:13.7px;top:626.8px;font-size:14.5px;line-height:17.4px;color:#333;">2</div>
<div style="left:30px;top:660px;width:856px;height:1px;background:#d4d4d4"></div>
<div style="left:1px;top:660px;width:28px;height:1px;background:#c6c6c6"></div>
<div id="t106" class="t" style="left:5.5px;top:644.8px;font-size:14.5px;line-height:17.4px;color:#333;">3</div>
<div id="t107" class="t" style="left:13.7px;top:644.8px;font-size:14.5px;line-height:17.4px;color:#333;">3</div>
<div style="left:30px;top:678px;width:856px;height:1px;background:#d4d4d4"></div>
<div style="left:1px;top:678px;width:28px;height:1px;background:#c6c6c6"></div>
<div id="t108" class="t" style="left:5.5px;top:662.8px;font-size:14.5px;line-height:17.4px;color:#333;">3</div>
<div id="t109" class="t" style="left:13.7px;top:662.8px;font-size:14.5px;line-height:17.4px;color:#333;">4</div>
<div style="left:30px;top:696px;width:856px;height:1px;background:#d4d4d4"></div>
<div style="left:1px;top:696px;width:28px;height:1px;background:#c6c6c6"></div>
<div id="t110" class="t" style="left:5.5px;top:680.8px;font-size:14.5px;line-height:17.4px;color:#333;">3</div>
<div id="t111" class="t" style="left:13.7px;top:680.8px;font-size:14.5px;line-height:17.4px;color:#333;">5</div>
<div style="left:886px;top:228px;width:1px;height:469px;background:#ababab"></div>
<div style="left:1px;top:696px;width:886px;height:1px;background:#d4d4d4"></div>
<div style="left:1px;top:696px;width:101px;height:2px;background:#ababab"></div>
<div id="t112" class="t" style="left:52.2px;top:231.8px;font-size:14.5px;line-height:17.4px;color:#222;">5</div>
<div id="t113" class="t" style="left:61.3px;top:231.8px;font-size:14.5px;line-height:17.4px;color:#222;">月</div>
<div id="t114" class="t" style="left:75.4px;top:231.8px;font-size:14.5px;line-height:17.4px;color:#222;">8</div>
<div id="t115" class="t" style="left:84.8px;top:231.8px;font-size:14.5px;line-height:17.4px;color:#222;">日</div>
<div id="t116" class="t" style="left:-177.2px;width:600px;text-align:center;top:231.9px;font-size:14.5px;line-height:17.4px;color:#222;transform:scaleX(0.8667);transform-origin:center center;">月</div>
<div id="t117" class="t" style="left:52.2px;top:249.8px;font-size:14.5px;line-height:17.4px;color:#222;">5</div>
<div id="t118" class="t" style="left:61.3px;top:249.8px;font-size:14.5px;line-height:17.4px;color:#222;">月</div>
<div id="t119" class="t" style="left:75.4px;top:249.8px;font-size:14.5px;line-height:17.4px;color:#222;">9</div>
<div id="t120" class="t" style="left:84.8px;top:249.8px;font-size:14.5px;line-height:17.4px;color:#222;">日</div>
<div id="t121" class="t" style="left:-177.2px;width:600px;text-align:center;top:249.9px;font-size:14.5px;line-height:17.4px;color:#222;transform:scaleX(0.8667);transform-origin:center center;">火</div>
<div id="t122" class="t" style="left:43.5px;top:267.8px;font-size:14.5px;line-height:17.4px;color:#222;">5</div>
<div id="t123" class="t" style="left:53px;top:267.8px;font-size:14.5px;line-height:17.4px;color:#222;">月</div>
<div id="t124" class="t" style="left:67.2px;top:267.8px;font-size:14.5px;line-height:17.4px;color:#222;">1</div>
<div id="t125" class="t" style="left:75.4px;top:267.8px;font-size:14.5px;line-height:17.4px;color:#222;">0</div>
<div id="t126" class="t" style="left:84.8px;top:267.8px;font-size:14.5px;line-height:17.4px;color:#222;">日</div>
<div id="t127" class="t" style="left:-177.2px;width:600px;text-align:center;top:267.9px;font-size:14.5px;line-height:17.4px;color:#222;transform:scaleX(0.8667);transform-origin:center center;">水</div>
<div id="t128" class="t" style="left:43.5px;top:285.8px;font-size:14.5px;line-height:17.4px;color:#222;">5</div>
<div id="t129" class="t" style="left:53px;top:285.8px;font-size:14.5px;line-height:17.4px;color:#222;">月</div>
<div id="t130" class="t" style="left:67.2px;top:285.8px;font-size:14.5px;line-height:17.4px;color:#222;">1</div>
<div id="t131" class="t" style="left:75.4px;top:285.8px;font-size:14.5px;line-height:17.4px;color:#222;">1</div>
<div id="t132" class="t" style="left:84.8px;top:285.8px;font-size:14.5px;line-height:17.4px;color:#222;">日</div>
<div id="t133" class="t" style="left:-177.2px;width:600px;text-align:center;top:285.9px;font-size:14.5px;line-height:17.4px;color:#222;transform:scaleX(0.8667);transform-origin:center center;">木</div>
<div id="t134" class="t" style="left:43.5px;top:303.8px;font-size:14.5px;line-height:17.4px;color:#222;">5</div>
<div id="t135" class="t" style="left:53px;top:303.8px;font-size:14.5px;line-height:17.4px;color:#222;">月</div>
<div id="t136" class="t" style="left:67.2px;top:303.8px;font-size:14.5px;line-height:17.4px;color:#222;">1</div>
<div id="t137" class="t" style="left:75.4px;top:303.8px;font-size:14.5px;line-height:17.4px;color:#222;">2</div>
<div id="t138" class="t" style="left:84.8px;top:303.8px;font-size:14.5px;line-height:17.4px;color:#222;">日</div>
<div id="t139" class="t" style="left:-177.2px;width:600px;text-align:center;top:303.9px;font-size:14.5px;line-height:17.4px;color:#222;transform:scaleX(0.8667);transform-origin:center center;">金</div>
<div id="t140" class="t" style="left:43.5px;top:321.8px;font-size:14.5px;line-height:17.4px;color:#222;">5</div>
<div id="t141" class="t" style="left:53px;top:321.8px;font-size:14.5px;line-height:17.4px;color:#222;">月</div>
<div id="t142" class="t" style="left:67.2px;top:321.8px;font-size:14.5px;line-height:17.4px;color:#222;">1</div>
<div id="t143" class="t" style="left:75.4px;top:321.8px;font-size:14.5px;line-height:17.4px;color:#222;">3</div>
<div id="t144" class="t" style="left:84.8px;top:321.8px;font-size:14.5px;line-height:17.4px;color:#222;">日</div>
<div id="t145" class="t" style="left:-177.2px;width:600px;text-align:center;top:321.9px;font-size:14.5px;line-height:17.4px;color:#222;transform:scaleX(0.8667);transform-origin:center center;">土</div>
<div id="t146" class="t" style="left:43.5px;top:339.8px;font-size:14.5px;line-height:17.4px;color:#222;">5</div>
<div id="t147" class="t" style="left:53px;top:339.8px;font-size:14.5px;line-height:17.4px;color:#222;">月</div>
<div id="t148" class="t" style="left:67.2px;top:339.8px;font-size:14.5px;line-height:17.4px;color:#222;">1</div>
<div id="t149" class="t" style="left:75.4px;top:339.8px;font-size:14.5px;line-height:17.4px;color:#222;">4</div>
<div id="t150" class="t" style="left:84.8px;top:339.8px;font-size:14.5px;line-height:17.4px;color:#222;">日</div>
<div id="t151" class="t" style="left:-177.2px;width:600px;text-align:center;top:339.9px;font-size:14.5px;line-height:17.4px;color:#222;transform:scaleX(0.8667);transform-origin:center center;">日</div>
<div id="t152" class="t" style="left:43.5px;top:357.8px;font-size:14.5px;line-height:17.4px;color:#222;">5</div>
<div id="t153" class="t" style="left:53px;top:357.8px;font-size:14.5px;line-height:17.4px;color:#222;">月</div>
<div id="t154" class="t" style="left:67.2px;top:357.8px;font-size:14.5px;line-height:17.4px;color:#222;">1</div>
<div id="t155" class="t" style="left:75.4px;top:357.8px;font-size:14.5px;line-height:17.4px;color:#222;">5</div>
<div id="t156" class="t" style="left:84.8px;top:357.8px;font-size:14.5px;line-height:17.4px;color:#222;">日</div>
<div id="t157" class="t" style="left:-177.2px;width:600px;text-align:center;top:357.9px;font-size:14.5px;line-height:17.4px;color:#222;transform:scaleX(0.8667);transform-origin:center center;">月</div>
<div id="t158" class="t" style="left:43.5px;top:375.8px;font-size:14.5px;line-height:17.4px;color:#222;">5</div>
<div id="t159" class="t" style="left:53px;top:375.8px;font-size:14.5px;line-height:17.4px;color:#222;">月</div>
<div id="t160" class="t" style="left:67.2px;top:375.8px;font-size:14.5px;line-height:17.4px;color:#222;">1</div>
<div id="t161" class="t" style="left:75.4px;top:375.8px;font-size:14.5px;line-height:17.4px;color:#222;">6</div>
<div id="t162" class="t" style="left:84.8px;top:375.8px;font-size:14.5px;line-height:17.4px;color:#222;">日</div>
<div id="t163" class="t" style="left:-177.2px;width:600px;text-align:center;top:375.9px;font-size:14.5px;line-height:17.4px;color:#222;transform:scaleX(0.8667);transform-origin:center center;">火</div>
<div id="t164" class="t" style="left:43.5px;top:393.8px;font-size:14.5px;line-height:17.4px;color:#222;">5</div>
<div id="t165" class="t" style="left:53px;top:393.8px;font-size:14.5px;line-height:17.4px;color:#222;">月</div>
<div id="t166" class="t" style="left:67.2px;top:393.8px;font-size:14.5px;line-height:17.4px;color:#222;">1</div>
<div id="t167" class="t" style="left:75.4px;top:393.8px;font-size:14.5px;line-height:17.4px;color:#222;">7</div>
<div id="t168" class="t" style="left:84.8px;top:393.8px;font-size:14.5px;line-height:17.4px;color:#222;">日</div>
<div id="t169" class="t" style="left:-177.2px;width:600px;text-align:center;top:393.9px;font-size:14.5px;line-height:17.4px;color:#222;transform:scaleX(0.8667);transform-origin:center center;">水</div>
<div id="t170" class="t" style="left:43.5px;top:411.8px;font-size:14.5px;line-height:17.4px;color:#222;">5</div>
<div id="t171" class="t" style="left:53px;top:411.8px;font-size:14.5px;line-height:17.4px;color:#222;">月</div>
<div id="t172" class="t" style="left:67.2px;top:411.8px;font-size:14.5px;line-height:17.4px;color:#222;">1</div>
<div id="t173" class="t" style="left:75.4px;top:411.8px;font-size:14.5px;line-height:17.4px;color:#222;">8</div>
<div id="t174" class="t" style="left:84.8px;top:411.8px;font-size:14.5px;line-height:17.4px;color:#222;">日</div>
<div id="t175" class="t" style="left:-177.2px;width:600px;text-align:center;top:411.9px;font-size:14.5px;line-height:17.4px;color:#222;transform:scaleX(0.8667);transform-origin:center center;">木</div>
<div id="t176" class="t" style="left:43.5px;top:429.8px;font-size:14.5px;line-height:17.4px;color:#222;">5</div>
<div id="t177" class="t" style="left:53px;top:429.8px;font-size:14.5px;line-height:17.4px;color:#222;">月</div>
<div id="t178" class="t" style="left:67.2px;top:429.8px;font-size:14.5px;line-height:17.4px;color:#222;">1</div>
<div id="t179" class="t" style="left:75.4px;top:429.8px;font-size:14.5px;line-height:17.4px;color:#222;">9</div>
<div id="t180" class="t" style="left:84.8px;top:429.8px;font-size:14.5px;line-height:17.4px;color:#222;">日</div>
<div id="t181" class="t" style="left:-177.2px;width:600px;text-align:center;top:429.9px;font-size:14.5px;line-height:17.4px;color:#222;transform:scaleX(0.8667);transform-origin:center center;">金</div>
<div id="t182" class="t" style="left:43.5px;top:447.8px;font-size:14.5px;line-height:17.4px;color:#222;">5</div>
<div id="t183" class="t" style="left:53px;top:447.8px;font-size:14.5px;line-height:17.4px;color:#222;">月</div>
<div id="t184" class="t" style="left:67.2px;top:447.8px;font-size:14.5px;line-height:17.4px;color:#222;">2</div>
<div id="t185" class="t" style="left:75.4px;top:447.8px;font-size:14.5px;line-height:17.4px;color:#222;">0</div>
<div id="t186" class="t" style="left:84.8px;top:447.8px;font-size:14.5px;line-height:17.4px;color:#222;">日</div>
<div id="t187" class="t" style="left:-177.2px;width:600px;text-align:center;top:447.9px;font-size:14.5px;line-height:17.4px;color:#222;transform:scaleX(0.8667);transform-origin:center center;">土</div>
<div id="t188" class="t" style="left:43.5px;top:465.8px;font-size:14.5px;line-height:17.4px;color:#222;">5</div>
<div id="t189" class="t" style="left:53px;top:465.8px;font-size:14.5px;line-height:17.4px;color:#222;">月</div>
<div id="t190" class="t" style="left:67.2px;top:465.8px;font-size:14.5px;line-height:17.4px;color:#222;">2</div>
<div id="t191" class="t" style="left:75.4px;top:465.8px;font-size:14.5px;line-height:17.4px;color:#222;">1</div>
<div id="t192" class="t" style="left:84.8px;top:465.8px;font-size:14.5px;line-height:17.4px;color:#222;">日</div>
<div id="t193" class="t" style="left:-177.2px;width:600px;text-align:center;top:465.9px;font-size:14.5px;line-height:17.4px;color:#222;transform:scaleX(0.8667);transform-origin:center center;">日</div>
<div id="t194" class="t" style="left:43.5px;top:483.8px;font-size:14.5px;line-height:17.4px;color:#222;">5</div>
<div id="t195" class="t" style="left:53px;top:483.8px;font-size:14.5px;line-height:17.4px;color:#222;">月</div>
<div id="t196" class="t" style="left:67.2px;top:483.8px;font-size:14.5px;line-height:17.4px;color:#222;">2</div>
<div id="t197" class="t" style="left:75.4px;top:483.8px;font-size:14.5px;line-height:17.4px;color:#222;">2</div>
<div id="t198" class="t" style="left:84.8px;top:483.8px;font-size:14.5px;line-height:17.4px;color:#222;">日</div>
<div id="t199" class="t" style="left:-177.2px;width:600px;text-align:center;top:483.9px;font-size:14.5px;line-height:17.4px;color:#222;transform:scaleX(0.8667);transform-origin:center center;">月</div>
<div id="t200" class="t" style="left:43.5px;top:501.8px;font-size:14.5px;line-height:17.4px;color:#222;">5</div>
<div id="t201" class="t" style="left:53px;top:501.8px;font-size:14.5px;line-height:17.4px;color:#222;">月</div>
<div id="t202" class="t" style="left:67.2px;top:501.8px;font-size:14.5px;line-height:17.4px;color:#222;">2</div>
<div id="t203" class="t" style="left:75.4px;top:501.8px;font-size:14.5px;line-height:17.4px;color:#222;">3</div>
<div id="t204" class="t" style="left:84.8px;top:501.8px;font-size:14.5px;line-height:17.4px;color:#222;">日</div>
<div id="t205" class="t" style="left:-177.2px;width:600px;text-align:center;top:501.9px;font-size:14.5px;line-height:17.4px;color:#222;transform:scaleX(0.8667);transform-origin:center center;">火</div>
<div id="t206" class="t" style="left:43.5px;top:519.8px;font-size:14.5px;line-height:17.4px;color:#222;">5</div>
<div id="t207" class="t" style="left:53px;top:519.8px;font-size:14.5px;line-height:17.4px;color:#222;">月</div>
<div id="t208" class="t" style="left:67.2px;top:519.8px;font-size:14.5px;line-height:17.4px;color:#222;">2</div>
<div id="t209" class="t" style="left:75.4px;top:519.8px;font-size:14.5px;line-height:17.4px;color:#222;">4</div>
<div id="t210" class="t" style="left:84.8px;top:519.8px;font-size:14.5px;line-height:17.4px;color:#222;">日</div>
<div id="t211" class="t" style="left:-177.2px;width:600px;text-align:center;top:519.9px;font-size:14.5px;line-height:17.4px;color:#222;transform:scaleX(0.8667);transform-origin:center center;">水</div>
<div id="t212" class="t" style="left:43.5px;top:537.8px;font-size:14.5px;line-height:17.4px;color:#222;">5</div>
<div id="t213" class="t" style="left:53px;top:537.8px;font-size:14.5px;line-height:17.4px;color:#222;">月</div>
<div id="t214" class="t" style="left:67.2px;top:537.8px;font-size:14.5px;line-height:17.4px;color:#222;">2</div>
<div id="t215" class="t" style="left:75.4px;top:537.8px;font-size:14.5px;line-height:17.4px;color:#222;">5</div>
<div id="t216" class="t" style="left:84.8px;top:537.8px;font-size:14.5px;line-height:17.4px;color:#222;">日</div>
<div id="t217" class="t" style="left:-177.2px;width:600px;text-align:center;top:537.9px;font-size:14.5px;line-height:17.4px;color:#222;transform:scaleX(0.8667);transform-origin:center center;">木</div>
<div id="t218" class="t" style="left:43.5px;top:555.8px;font-size:14.5px;line-height:17.4px;color:#222;">5</div>
<div id="t219" class="t" style="left:53px;top:555.8px;font-size:14.5px;line-height:17.4px;color:#222;">月</div>
<div id="t220" class="t" style="left:67.2px;top:555.8px;font-size:14.5px;line-height:17.4px;color:#222;">2</div>
<div id="t221" class="t" style="left:75.4px;top:555.8px;font-size:14.5px;line-height:17.4px;color:#222;">6</div>
<div id="t222" class="t" style="left:84.8px;top:555.8px;font-size:14.5px;line-height:17.4px;color:#222;">日</div>
<div id="t223" class="t" style="left:-177.2px;width:600px;text-align:center;top:555.9px;font-size:14.5px;line-height:17.4px;color:#222;transform:scaleX(0.8667);transform-origin:center center;">金</div>
<div id="t224" class="t" style="left:43.5px;top:573.8px;font-size:14.5px;line-height:17.4px;color:#222;">5</div>
<div id="t225" class="t" style="left:53px;top:573.8px;font-size:14.5px;line-height:17.4px;color:#222;">月</div>
<div id="t226" class="t" style="left:67.2px;top:573.8px;font-size:14.5px;line-height:17.4px;color:#222;">2</div>
<div id="t227" class="t" style="left:75.4px;top:573.8px;font-size:14.5px;line-height:17.4px;color:#222;">7</div>
<div id="t228" class="t" style="left:84.8px;top:573.8px;font-size:14.5px;line-height:17.4px;color:#222;">日</div>
<div id="t229" class="t" style="left:-177.2px;width:600px;text-align:center;top:573.9px;font-size:14.5px;line-height:17.4px;color:#222;transform:scaleX(0.8667);transform-origin:center center;">土</div>
<div id="t230" class="t" style="left:43.5px;top:591.8px;font-size:14.5px;line-height:17.4px;color:#222;">5</div>
<div id="t231" class="t" style="left:53px;top:591.8px;font-size:14.5px;line-height:17.4px;color:#222;">月</div>
<div id="t232" class="t" style="left:67.2px;top:591.8px;font-size:14.5px;line-height:17.4px;color:#222;">2</div>
<div id="t233" class="t" style="left:75.4px;top:591.8px;font-size:14.5px;line-height:17.4px;color:#222;">8</div>
<div id="t234" class="t" style="left:84.8px;top:591.8px;font-size:14.5px;line-height:17.4px;color:#222;">日</div>
<div id="t235" class="t" style="left:-177.2px;width:600px;text-align:center;top:591.9px;font-size:14.5px;line-height:17.4px;color:#222;transform:scaleX(0.8667);transform-origin:center center;">日</div>
<div id="t236" class="t" style="left:43.5px;top:609.8px;font-size:14.5px;line-height:17.4px;color:#222;">5</div>
<div id="t237" class="t" style="left:53px;top:609.8px;font-size:14.5px;line-height:17.4px;color:#222;">月</div>
<div id="t238" class="t" style="left:67.2px;top:609.8px;font-size:14.5px;line-height:17.4px;color:#222;">2</div>
<div id="t239" class="t" style="left:75.4px;top:609.8px;font-size:14.5px;line-height:17.4px;color:#222;">9</div>
<div id="t240" class="t" style="left:84.8px;top:609.8px;font-size:14.5px;line-height:17.4px;color:#222;">日</div>
<div id="t241" class="t" style="left:-177.2px;width:600px;text-align:center;top:609.9px;font-size:14.5px;line-height:17.4px;color:#222;transform:scaleX(0.8667);transform-origin:center center;">月</div>
<div id="t242" class="t" style="left:43.5px;top:627.8px;font-size:14.5px;line-height:17.4px;color:#222;">5</div>
<div id="t243" class="t" style="left:53px;top:627.8px;font-size:14.5px;line-height:17.4px;color:#222;">月</div>
<div id="t244" class="t" style="left:67.2px;top:627.8px;font-size:14.5px;line-height:17.4px;color:#222;">3</div>
<div id="t245" class="t" style="left:75.4px;top:627.8px;font-size:14.5px;line-height:17.4px;color:#222;">0</div>
<div id="t246" class="t" style="left:84.8px;top:627.8px;font-size:14.5px;line-height:17.4px;color:#222;">日</div>
<div id="t247" class="t" style="left:-177.2px;width:600px;text-align:center;top:627.9px;font-size:14.5px;line-height:17.4px;color:#222;transform:scaleX(0.8667);transform-origin:center center;">火</div>
<div id="t248" class="t" style="left:43.5px;top:645.8px;font-size:14.5px;line-height:17.4px;color:#222;">5</div>
<div id="t249" class="t" style="left:53px;top:645.8px;font-size:14.5px;line-height:17.4px;color:#222;">月</div>
<div id="t250" class="t" style="left:67.2px;top:645.8px;font-size:14.5px;line-height:17.4px;color:#222;">3</div>
<div id="t251" class="t" style="left:75.4px;top:645.8px;font-size:14.5px;line-height:17.4px;color:#222;">1</div>
<div id="t252" class="t" style="left:84.8px;top:645.8px;font-size:14.5px;line-height:17.4px;color:#222;">日</div>
<div id="t253" class="t" style="left:-177.2px;width:600px;text-align:center;top:645.9px;font-size:14.5px;line-height:17.4px;color:#222;transform:scaleX(0.8667);transform-origin:center center;">水</div>
<svg style="left:30px;top:642px;" width="72" height="19" viewBox="0 0 72 19"><rect x="1" y="1" width="70" height="17" fill="none" stroke="#217346" stroke-width="2" stroke-dasharray="4.5 2"/></svg>
<div style="left:887px;top:211px;width:21px;height:486px;background:#e6e6e6"></div>
<div style="left:890px;top:228px;width:15px;height:108px;background:#dedede"></div>
<div style="left:890px;top:213px;width:15px;height:15px;background:#fff;border:1px solid #ababab"></div>
<svg style="left:893px;top:218px;" width="9" height="5" viewBox="0 0 9 5"><path d="M0 5h9L4.5 0z" fill="#666"/></svg>
<div style="left:890px;top:336px;width:15px;height:346px;background:#fff;border:1px solid #ababab"></div>
<div style="left:890px;top:682px;width:15px;height:15px;background:#fff;border:1px solid #ababab"></div>
<svg style="left:893px;top:687px;" width="9" height="5" viewBox="0 0 9 5"><path d="M0 0h9L4.5 5z" fill="#666"/></svg>
<div style="left:1px;top:697px;width:907px;height:28px;background:#e6e6e6"></div>
<div style="left:1px;top:697px;width:101px;height:1px;background:#ababab"></div>
<svg style="left:29px;top:706px;" width="5" height="9" viewBox="0 0 5 9"><path d="M5 0v9L0 4.5z" fill="#c0c0c0"/></svg>
<svg style="left:57px;top:706px;" width="5" height="9" viewBox="0 0 5 9"><path d="M0 0v9l5-4.5z" fill="#c0c0c0"/></svg>
<div style="left:101px;top:697px;width:1px;height:24px;background:#ababab"></div>
<div style="left:102px;top:697px;width:62px;height:23px;background:#fff"></div>
<div style="left:101px;top:720px;width:64px;height:2px;background:#217346"></div>
<div style="left:164px;top:697px;width:1px;height:24px;background:#ababab"></div>
<div style="left:164px;top:697px;width:723px;height:1px;background:#ababab"></div>
<div id="t254" class="t" style="left:112px;top:701.6px;font-size:14px;line-height:16.8px;color:#217346;transform:scaleX(0.9524);transform-origin:left center;">勤務表</div>
<div id="t255" class="t" style="left:176px;top:701.6px;font-size:14px;line-height:16.8px;color:#444;transform:scaleX(0.9464);transform-origin:left center;">祭日一覧</div>
<div style="left:239px;top:701px;width:1px;height:20px;background:#ababab"></div>
<svg style="left:272px;top:702px;" width="18" height="18" viewBox="0 0 18 18"><circle cx="9" cy="9" r="7.8" fill="none" stroke="#777" stroke-width="1.3"/><path d="M9 4.8v8.4M4.8 9h8.4" stroke="#777" stroke-width="1.6"/></svg>
<div style="left:545px;top:707px;width:2px;height:2px;background:#b0b0b0"></div>
<div style="left:545px;top:711px;width:2px;height:2px;background:#b0b0b0"></div>
<div style="left:545px;top:715px;width:2px;height:2px;background:#b0b0b0"></div>
<div style="left:562px;top:704px;width:327px;height:15px;background:#fff;border:1px solid #ababab"></div>
<div style="left:577px;top:704px;width:1px;height:15px;background:#ababab"></div>
<svg style="left:566px;top:708px;" width="5" height="8" viewBox="0 0 5 8"><path d="M5 0v8L0 4z" fill="#666"/></svg>
<div style="left:846px;top:705px;width:28px;height:13px;background:#dedede"></div>
<div style="left:874px;top:704px;width:15px;height:15px;background:#fff;border:1px solid #ababab"></div>
<svg style="left:880px;top:708px;" width="5" height="8" viewBox="0 0 5 8"><path d="M0 0v8l5-4z" fill="#666"/></svg>
<div style="left:1px;top:725px;width:907px;height:22px;background:#f3f3f3"></div>
<div style="left:1px;top:725px;width:907px;height:1px;background:#c6c6c6"></div>
<div id="t256" class="t" style="left:9px;top:728.0px;font-size:12.5px;line-height:15.0px;color:#555;transform:scaleX(0.9231);transform-origin:left center;">参照</div>
<svg style="left:76px;top:729px;" width="14" height="14" viewBox="0 0 14 14"><circle cx="3" cy="3" r="2.7" fill="#666"/><rect x="6.7" y="1" width="6.3" height="2.3" fill="#666"/><rect x="1.5" y="4" width="11.5" height="9" fill="#666"/><rect x="3.0" y="6.0" width="1.5" height="1.3" fill="#fff"/><rect x="5.5" y="6.0" width="1.5" height="1.3" fill="#fff"/><rect x="8.0" y="6.0" width="1.5" height="1.3" fill="#fff"/><rect x="10.5" y="6.0" width="1.5" height="1.3" fill="#fff"/><rect x="3.0" y="8.3" width="1.5" height="1.3" fill="#fff"/><rect x="5.5" y="8.3" width="1.5" height="1.3" fill="#fff"/><rect x="8.0" y="8.3" width="1.5" height="1.3" fill="#fff"/><rect x="10.5" y="8.3" width="1.5" height="1.3" fill="#fff"/><rect x="3.0" y="10.6" width="1.5" height="1.3" fill="#fff"/><rect x="5.5" y="10.6" width="1.5" height="1.3" fill="#fff"/><rect x="8.0" y="10.6" width="1.5" height="1.3" fill="#fff"/><rect x="10.5" y="10.6" width="1.5" height="1.3" fill="#fff"/></svg>
<svg style="left:617px;top:729px;" width="14" height="14" viewBox="0 0 14 14"><path d="M0.5 0.5h13v13h-13zM0.5 4.8h13M0.5 9.2h13M4.8 0.5v13M9.2 0.5v13" fill="none" stroke="#666" stroke-width="1.1"/></svg>
<svg style="left:655px;top:729px;" width="15" height="14" viewBox="0 0 15 14"><rect x="0.5" y="0.5" width="14" height="13" fill="none" stroke="#666" stroke-width="1.1"/><rect x="3.5" y="2.5" width="8" height="9" fill="none" stroke="#666" stroke-width="1"/><path d="M5 5h5M5 7h5M5 9h5" stroke="#777" stroke-width="0.9"/></svg>
<svg style="left:693px;top:729px;" width="15" height="14" viewBox="0 0 15 14"><rect x="0.5" y="0.5" width="14" height="13" fill="none" stroke="#666" stroke-width="1.1"/><path d="M0.5 7h9V0.5M5 0.5V7" fill="none" stroke="#666" stroke-width="1.1"/></svg>
<div style="left:724px;top:735px;width:7px;height:2px;background:#555"></div>
<div style="left:734px;top:735px;width:99px;height:1px;background:#b9b9b9"></div>
<div style="left:784px;top:732px;width:1px;height:6px;background:#8a8a8a"></div>
<div style="left:837px;top:735px;width:9px;height:2px;background:#555"></div>
<div style="left:840.5px;top:731.5px;width:2px;height:9px;background:#555"></div>
<div id="t257" class="t" style="left:857px;top:728.2px;font-size:13px;line-height:15.6px;color:#aaa;transform:scaleX(0.9624);transform-origin:left center;">100%</div>
<div style="left:182px;top:314px;width:586px;height:334px;background:#f0f0f0;border:1px solid #e3008c"></div>
<div style="left:182px;top:314px;width:586px;height:31px;background:#e3008c"></div>
<div id="t258" class="t" style="left:191.5px;top:322.3px;font-size:12.5px;line-height:15.0px;color:#fff;transform:scaleX(0.8769);transform-origin:left center;">関数の引数</div>
<div id="t259" class="t" style="left:399px;width:600px;text-align:center;top:321.7px;font-size:13px;line-height:15.6px;color:#fff;">?</div>
<svg style="left:739px;top:324px;" width="11" height="11" viewBox="0 0 11 11"><path d="M0.5 0.5l10 10M10.5 0.5l-10 10" stroke="#fff" stroke-width="1.2"/></svg>
<div style="left:189px;top:360px;width:571px;height:99px;border:1px solid #dcdcdc"></div>
<div style="left:193px;top:352px;width:98px;height:14px;background:#f0f0f0"></div>
<div id="t260" class="t" style="left:195px;top:354.0px;font-size:12.5px;line-height:15.0px;color:#000;transform:scaleX(0.9588);transform-origin:left center;">NETWORKDAYS</div>
<div id="t261" class="t" style="right:591px;top:379.5px;font-size:12.5px;line-height:15.0px;color:#000;transform:scaleX(0.8718);transform-origin:right center;">開始日</div>
<div style="left:328px;top:376px;width:198px;height:23px;background:#fff;border:1px solid #a0a0a0"></div>
<div id="t262" class="t" style="left:332px;top:379.5px;font-size:12.5px;line-height:15.0px;color:#000;">A3</div>
<div style="left:504px;top:376px;width:22px;height:23px;background:#e1e1e1;border:2px solid #adadad"></div>
<div style="left:506px;top:378px;width:17px;height:14px;background:#fff"></div>
<svg style="left:509px;top:380px;" width="11" height="11" viewBox="0 0 11 11"><path d="M5.5 1L1.5 5h2.5v3.5h3V5h2.5z" fill="#000"/><rect x="1" y="9.5" width="9" height="1.3" fill="#000"/></svg>
<div id="t263" class="t" style="left:536px;top:380.5px;font-size:12.5px;line-height:15.0px;color:#000;">=</div>
<div id="t264" class="t" style="left:554px;top:380.7px;font-size:12.5px;line-height:15.0px;color:#000;transform:scaleX(1.0067);transform-origin:left center;">42856</div>
<div id="t265" class="t" style="right:591px;top:406.5px;font-size:12.5px;line-height:15.0px;color:#000;transform:scaleX(0.8718);transform-origin:right center;">終了日</div>
<div style="left:328px;top:403px;width:198px;height:23px;background:#fff;border:1px solid #a0a0a0"></div>
<div id="t266" class="t" style="left:332px;top:406.5px;font-size:12.5px;line-height:15.0px;color:#000;">A33</div>
<div style="left:504px;top:403px;width:22px;height:23px;background:#e1e1e1;border:2px solid #adadad"></div>
<div style="left:506px;top:405px;width:17px;height:14px;background:#fff"></div>
<svg style="left:509px;top:407px;" width="11" height="11" viewBox="0 0 11 11"><path d="M5.5 1L1.5 5h2.5v3.5h3V5h2.5z" fill="#000"/><rect x="1" y="9.5" width="9" height="1.3" fill="#000"/></svg>
<div id="t267" class="t" style="left:536px;top:407.5px;font-size:12.5px;line-height:15.0px;color:#000;">=</div>
<div id="t268" class="t" style="left:554px;top:407.7px;font-size:12.5px;line-height:15.0px;color:#000;transform:scaleX(1.0067);transform-origin:left center;">42886</div>
<div id="t269" class="t" style="right:591px;top:433.5px;font-size:12.5px;line-height:15.0px;color:#000;transform:scaleX(0.8846);transform-origin:right center;">祭日</div>
<div style="left:328px;top:430px;width:198px;height:23px;background:#fff;border:1px solid #a0a0a0"></div>
<div style="left:504px;top:430px;width:22px;height:23px;background:#e1e1e1;border:2px solid #adadad"></div>
<div style="left:506px;top:432px;width:17px;height:14px;background:#fff"></div>
<svg style="left:509px;top:434px;" width="11" height="11" viewBox="0 0 11 11"><path d="M5.5 1L1.5 5h2.5v3.5h3V5h2.5z" fill="#000"/><rect x="1" y="9.5" width="9" height="1.3" fill="#000"/></svg>
<div id="t270" class="t" style="left:536px;top:434.5px;font-size:12.5px;line-height:15.0px;color:#000;">=</div>
<div id="t271" class="t" style="left:554px;top:434.7px;font-size:12.5px;line-height:15.0px;color:#9a9a9a;transform:scaleX(0.7436);transform-origin:left center;">すべて</div>
<div id="t272" class="t" style="left:536px;top:466.0px;font-size:12.5px;line-height:15.0px;color:#000;">=</div>
<div id="t273" class="t" style="left:554px;top:466.2px;font-size:12.5px;line-height:15.0px;color:#000;">23</div>
<div id="t274" class="t" style="left:189.5px;top:484.5px;font-size:12.5px;line-height:15.0px;color:#000;transform:scaleX(0.8365);transform-origin:left center;">開始日と終了日の間にある週日の日数を計算します。</div>
<div id="t275" class="t" style="left:352.5px;top:511.8px;font-size:12.5px;line-height:15.0px;color:#000;transform:scaleX(0.8718);transform-origin:left center;">終了日</div>
<div id="t276" class="t" style="left:396.8px;top:511.8px;font-size:12.5px;line-height:15.0px;color:#000;transform:scaleX(0.7933);transform-origin:left center;">には、対象となる期間の最終日となる日付のシリアル値を指定します。</div>
<div style="left:189px;top:570px;width:572px;height:1px;background:#dcdcdc"></div>
<div id="t277" class="t" style="left:189.3px;top:585.2px;font-size:12.5px;line-height:15.0px;color:#000;transform:scaleX(0.9237);transform-origin:left center;">数式の結果 =</div>
<div id="t278" class="t" style="left:270.6px;top:585.2px;font-size:12.5px;line-height:15.0px;color:#000;transform:scaleX(0.9061);transform-origin:left center;">23</div>
<div id="t279" class="t" style="left:189.3px;top:617.9px;font-size:12.5px;line-height:15.0px;color:#0066cc;transform:scaleX(0.8240);transform-origin:left center;text-decoration:underline">この関数のヘルプ(H)</div>
<div style="left:602px;top:613px;width:74px;height:25px;background:#e1e1e1;border:2px solid #0078d7"></div>
<div id="t280" class="t" style="left:339px;width:600px;text-align:center;top:618.0px;font-size:12.5px;line-height:15.0px;color:#000;">OK</div>
<div style="left:686px;top:613px;width:74px;height:25px;background:#e1e1e1;border:1px solid #adadad"></div>
<div id="t281" class="t" style="left:423px;width:600px;text-align:center;top:618.0px;font-size:12.5px;line-height:15.0px;color:#000;transform:scaleX(0.7231);transform-origin:center center;">キャンセル</div>
</body></html>
